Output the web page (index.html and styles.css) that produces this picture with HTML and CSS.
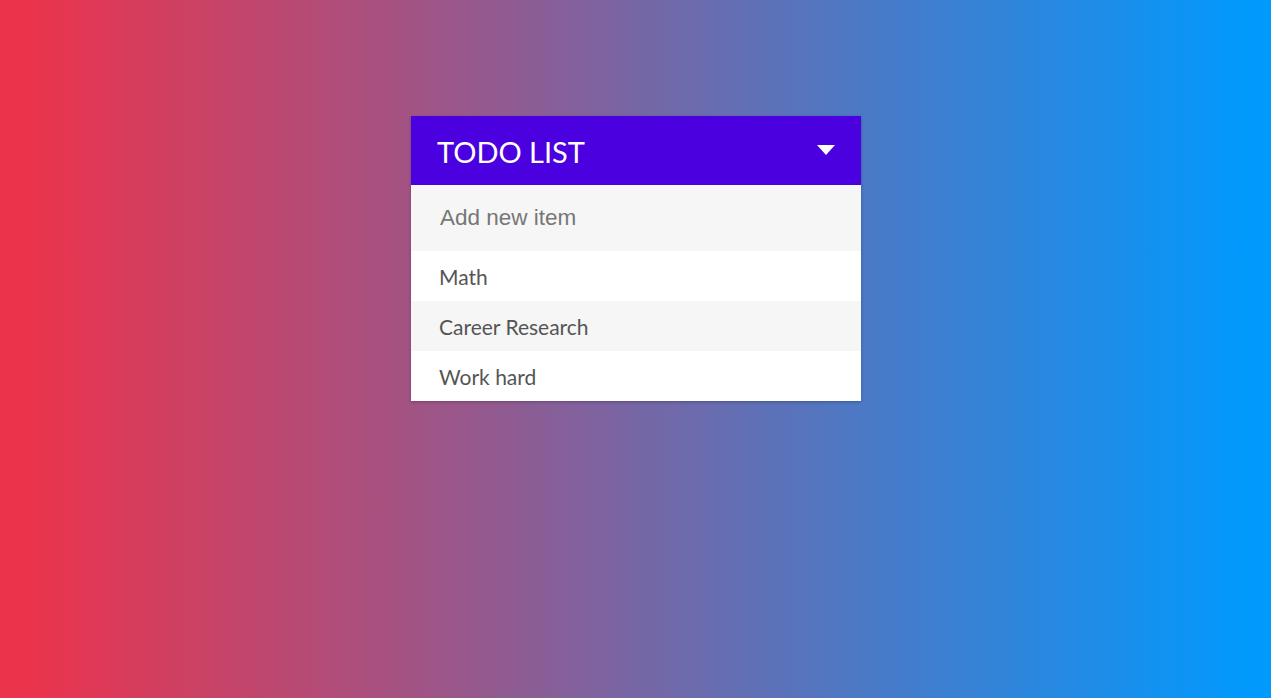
FILE: index.html
```html
<!DOCTYPE html>
<html>
<head>
<meta charset="utf-8">
<link rel="stylesheet" href="styles.css">
</head>
<body>
<div class="page">
  <div class="card">
    <div class="header">
      <h1 class="title">TODO LIST</h1>
      <svg class="caret" width="18" height="10" viewBox="0 0 18 10"><path d="M0 0 L18 0 L9 10 Z" fill="#fff"/></svg>
    </div>
    <input class="new-item" type="text" placeholder="Add new item">
    <ul class="list">
      <li class="item">Math</li>
      <li class="item alt">Career Research</li>
      <li class="item">Work hard</li>
    </ul>
  </div>
</div>
</body>
</html>
```
FILE: styles.css
```css
html, body {
  margin: 0;
  padding: 0;
  height: 100%;
}
body {
  background: linear-gradient(to right, #ec334c 2%, #0299fd 98%);
  font-family: "Source Sans Pro", Lato, "Open Sans", sans-serif;
}
.page {
  display: flex;
  justify-content: center;
  padding-top: 116px;
}
.card {
  width: 450px;
  margin-left: 1px;
  box-shadow: 0 1px 3px rgba(0,0,0,0.25);
  background: #fff;
}
.header {
  height: 69px;
  background: #4b00e0;
  display: flex;
  align-items: center;
  justify-content: space-between;
  padding: 0 26px 0 26px;
  box-sizing: border-box;
}
.title {
  margin: 0;
  color: #fff;
  font-weight: 400;
  font-size: 29px;
  margin-top: 2px;
}
.caret {
  display: block;
  margin-top: -2px;
}
.new-item {
  display: block;
  width: 100%;
  height: 66px;
  box-sizing: border-box;
  border: none;
  outline: none;
  background: #f6f6f6;
  padding: 0 29px;
  font-family: "Liberation Sans", Arial, sans-serif;
  font-size: 22.5px;
  color: #555;
}
.new-item::placeholder {
  color: #777;
}
.list {
  list-style: none;
  margin: 0;
  padding: 0;
}
.item {
  height: 50px;
  display: flex;
  align-items: center;
  padding: 0 28px;
  font-size: 21px;
  color: #555;
  background: #fff;
}
.item.alt {
  background: #f6f6f6;
}
```
